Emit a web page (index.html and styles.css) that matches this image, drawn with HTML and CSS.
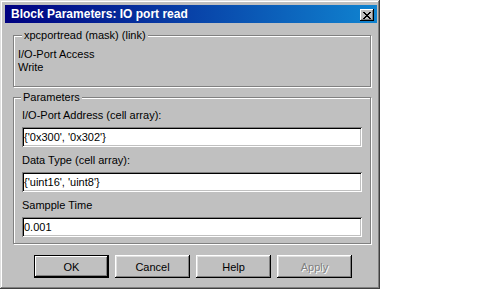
FILE: index.html
```html
<!DOCTYPE html>
<html lang="en">
<head>
    <meta charset="UTF-8">
    <title>Block Parameters: IO port read</title>
    <link rel="stylesheet" href="styles.css">
</head>
<body>
    <div class="window">
        <div class="titlebar">
            <span class="title">Block Parameters: IO port read</span>
            <button class="close" aria-label="Close">
                <svg width="8" height="7" viewBox="0 0 8 7">
                    <path d="M0 0h2v1h-2z M6 0h2v1h-2z M1 1h2v1h-2z M5 1h2v1h-2z M2 2h4v1h-4z M3 3h2v1h-2z M2 4h4v1h-4z M1 5h2v1h-2z M5 5h2v1h-2z M0 6h2v1h-2z M6 6h2v1h-2z" fill="#000"/>
                </svg>
            </button>
        </div>

        <div class="content">
            <fieldset class="group mask">
                <legend>xpcportread (mask) (link)</legend>
                <p class="desc">I/O-Port Access<br>Write</p>
            </fieldset>

            <fieldset class="group params">
                <legend>Parameters</legend>
                <label for="addr">I/O-Port Address (cell array):</label>
                <input id="addr" class="field" type="text" value="{'0x300', '0x302'}">
                <label for="dtype">Data Type (cell array):</label>
                <input id="dtype" class="field" type="text" value="{'uint16', 'uint8'}">
                <label for="ts">Sampple Time</label>
                <input id="ts" class="field" type="text" value="0.001">
            </fieldset>

            <div class="buttons">
                <button class="btn default">OK</button>
                <button class="btn">Cancel</button>
                <button class="btn">Help</button>
                <button class="btn" disabled>Apply</button>
            </div>
        </div>
    </div>
</body>
</html>
```

FILE: styles.css
```css
body {
    margin: 0;
    padding: 0;
    background: #ffffff;
    font-family: "Liberation Sans", Arial, sans-serif;
    font-size: 11px;
    color: #000000;
}

.window {
    box-sizing: border-box;
    width: 380px;
    height: 289px;
    padding: 5px 3px 0 5px;
    background: #c0c0c0;
    box-shadow: inset -1px -1px 0 #404040, inset 1px 1px 0 #dfdfdf,
                inset -2px -2px 0 #808080, inset 2px 2px 0 #ffffff;
}

.titlebar {
    display: flex;
    align-items: center;
    justify-content: space-between;
    height: 18px;
    padding: 0 3px 0 6px;
    background: linear-gradient(to right, #000080, #1084d0);
}

.title {
    color: #ffffff;
    font-weight: bold;
    font-size: 12px;
    line-height: 18px;
}

.close {
    display: flex;
    align-items: center;
    justify-content: center;
    width: 14px;
    height: 12px;
    margin-top: 2px;
    padding: 0;
    border: none;
    background: #c0c0c0;
    box-shadow: inset -1px -1px 0 #000000, inset 1px 1px 0 #ffffff,
                inset -2px -2px 0 #808080;
}

.content {
    padding: 6px 6px 0 8px;
}

/* group boxes with etched frame */
.group {
    margin: 0;
    border: 1px solid #808080;
    box-shadow: 1px 1px 0 #ffffff, inset 1px 1px 0 #ffffff;
    min-inline-size: 0;
}

.group legend {
    padding: 0 2px;
    line-height: 13px;
    background: #c0c0c0;
}

.mask {
    padding: 6px 5px 12px 4px;
}

.mask legend {
    margin-left: 4px;
}

.desc {
    margin: 0;
    line-height: 13px;
}

.params {
    margin-top: 4px;
    padding: 5px 8px 6px 8px;
}

.params legend {
    margin-left: -1px;
}

.params label {
    display: block;
    line-height: 13px;
    margin-bottom: 5px;
}

.field {
    display: block;
    box-sizing: border-box;
    width: 100%;
    height: 20px;
    margin: 0 0 7px 0;
    padding: 0 2px;
    border: none;
    background: #ffffff;
    font-family: inherit;
    font-size: 11px;
    color: #000000;
    box-shadow: inset 1px 1px 0 #808080, inset -1px -1px 0 #ffffff,
                inset 2px 2px 0 #000000, inset -2px -2px 0 #c0c0c0;
}

.field:last-child {
    margin-bottom: 0;
}

.buttons {
    display: flex;
    gap: 6px;
    margin-top: 11px;
    padding-left: 21px;
}

.btn {
    width: 75px;
    height: 23px;
    padding: 0;
    border: none;
    background: #c0c0c0;
    font-family: inherit;
    font-size: 11px;
    color: #000000;
    box-shadow: inset -1px -1px 0 #000000, inset 1px 1px 0 #ffffff,
                inset -2px -2px 0 #808080, inset 2px 2px 0 #dfdfdf;
}

.btn.default {
    box-shadow: inset 0 0 0 1px #000000, inset -2px -2px 0 #000000,
                inset 2px 2px 0 #ffffff, inset -3px -3px 0 #808080;
}

.btn:disabled {
    color: #808080;
    text-shadow: 1px 1px 0 #ffffff;
}
```
